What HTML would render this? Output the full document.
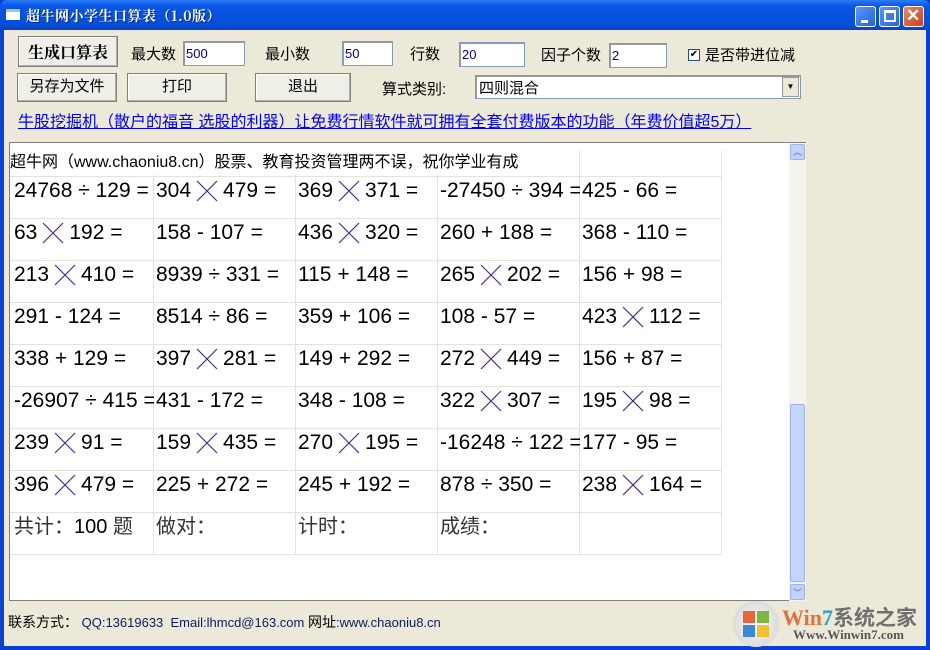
<!DOCTYPE html>
<html><head><meta charset="utf-8"><style>
*{margin:0;padding:0;box-sizing:border-box}
body{width:930px;height:650px;overflow:hidden;background:#0a3fd8;font-family:"Liberation Sans","Noto Sans CJK SC",sans-serif;position:relative}
.title{position:absolute;left:0;top:0;width:930px;height:30px;background:linear-gradient(#2a7cf5,#0a56e6 20%,#0450d8 80%,#0a42c0);border-radius:7px 7px 0 0}
.title .t{position:absolute;left:26px;top:6px;color:#fff;font-weight:bold;font-size:14px;font-family:"Noto Serif CJK SC","Liberation Serif",serif;text-shadow:1px 1px #0a2a80;letter-spacing:0.5px}
.ico{position:absolute;left:6px;top:9px;width:14px;height:11px;background:#fff;border-top:3px solid #9cc}
.tb{position:absolute;top:6px;width:21px;height:21px;border:1px solid #fff;border-radius:3px;background:linear-gradient(135deg,#5a95f5,#2463e0)}
.client{position:absolute;left:4px;top:30px;width:922px;height:616px;background:#ece9d8}
.a{position:absolute;font-size:15px;color:#000;white-space:nowrap}
.btn{position:absolute;background:#f0efe7;border:1px solid #7f7f7f;box-shadow:inset -1px -1px #b5b2a5,inset 1px 1px #fff;font-size:15px;text-align:center;line-height:26px}
.in{position:absolute;background:#fff;border:1px solid #7f9db9;box-shadow:inset 1px 1px #999;font-size:13px;padding:4px 0 0 2px;color:#008}
.panel{position:absolute;left:9px;top:142px;width:797px;height:459px;background:#fff;border:1px solid #808080;border-right:none}
.vl{position:absolute;top:8px;width:1px;height:404px;background:#e6e3d6}
.hl{position:absolute;left:0;width:712px;height:1px;background:#e6e3d6}
.c{position:absolute;font-size:21px;line-height:24px;height:24px;white-space:nowrap;color:#000}
.x{display:inline-block;width:24px;height:24px;vertical-align:top;margin:0 4px}
.sb{position:absolute;left:779px;top:0;width:17px;height:458px;background:#f4f3ee}
</style></head><body>
<div class="title"><div class="ico"></div><div class="t">超牛网小学生口算表（1.0版）</div>
<div class="tb" style="left:855px"><div style="position:absolute;left:5px;top:13px;width:7px;height:3px;background:#fff"></div></div>
<div class="tb" style="left:879px"><div style="position:absolute;left:4px;top:3px;width:12px;height:12px;border:2px solid #fff;border-top-width:3px"></div></div>
<div class="tb" style="left:903px;background:linear-gradient(135deg,#e88a6a,#c8401a)"><div style="position:absolute;left:2px;top:-1px;color:#fff;font-size:17px;font-weight:bold">✕</div></div>
</div>
<div class="client"></div>
<div class="btn" style="left:18px;top:36px;width:100px;height:31px;line-height:29px;font-weight:bold;font-size:16px;font-family:'Noto Serif CJK SC',serif">生成口算表</div>
<div class="a" style="left:131px;top:43px">最大数</div><div class="in" style="left:183px;top:41px;width:62px;height:25px">500</div>
<div class="a" style="left:265px;top:43px">最小数</div><div class="in" style="left:342px;top:41px;width:51px;height:25px">50</div>
<div class="a" style="left:410px;top:43px">行数</div><div class="in" style="left:459px;top:42px;width:66px;height:25px">20</div>
<div class="a" style="left:541px;top:44px">因子个数</div><div class="in" style="left:609px;top:43px;width:58px;height:25px">2</div>
<div style="position:absolute;left:688px;top:49px;width:12px;height:12px;background:#fff;border:1px solid #1c5180;font-size:10px;line-height:10px;text-align:center">✔</div>
<div class="a" style="left:705px;top:44px">是否带进位减</div>
<div class="btn" style="left:17px;top:73px;width:100px;height:29px">另存为文件</div>
<div class="btn" style="left:127px;top:73px;width:100px;height:29px">打印</div>
<div class="btn" style="left:255px;top:73px;width:96px;height:29px">退出</div>
<div class="a" style="left:382px;top:78px">算式类别:</div>
<div class="in" style="left:475px;top:75px;width:326px;height:24px;color:#000;font-size:15px;padding:1px 0 0 3px">四则混合<div style="position:absolute;right:1px;top:1px;width:17px;height:20px;background:#ece9d8;border:1px solid #999;font-size:8px;text-align:center;line-height:18px">▼</div></div>
<div class="a" style="left:18px;top:108px;color:#00f;text-decoration:underline;font-size:16px">牛股挖掘机（散户的福音 选股的利器）让免费行情软件就可拥有全套付费版本的功能（年费价值超5万）</div>
<div class="panel">
<div class="vl" style="left:143px"></div><div class="vl" style="left:285px"></div><div class="vl" style="left:427px"></div><div class="vl" style="left:569px"></div><div class="vl" style="left:711px"></div>
<div class="c" style="left:0px;top:8px;font-size:16px;background:#fff">超牛网（www.chaoniu8.cn）股票、教育投资管理两不误，祝你学业有成</div>
<div class="hl" style="top:33px"></div><div class="hl" style="top:75px"></div><div class="hl" style="top:117px"></div><div class="hl" style="top:159px"></div><div class="hl" style="top:201px"></div><div class="hl" style="top:243px"></div><div class="hl" style="top:285px"></div><div class="hl" style="top:327px"></div><div class="hl" style="top:369px"></div><div class="hl" style="top:411px"></div>
<svg width="0" height="0" style="position:absolute"><defs><symbol id="m" viewBox="0 0 24 24"><path d="M2 2L22 22M22 2L2 22" stroke="#4a2a8a" stroke-width="1.2"/></symbol></defs></svg>
<div class="c" style="left:4px;top:36px;width:140px;overflow:hidden">24768 ÷ 129 =</div><div class="c" style="left:146px;top:36px">304<svg class="x"><use href="#m"/></svg>479 =</div><div class="c" style="left:288px;top:36px">369<svg class="x"><use href="#m"/></svg>371 =</div><div class="c" style="left:430px;top:36px;width:140px;overflow:hidden">-27450 ÷ 394 =</div><div class="c" style="left:572px;top:36px">425 - 66 =</div>
<div class="c" style="left:4px;top:78px">63<svg class="x"><use href="#m"/></svg>192 =</div><div class="c" style="left:146px;top:78px">158 - 107 =</div><div class="c" style="left:288px;top:78px">436<svg class="x"><use href="#m"/></svg>320 =</div><div class="c" style="left:430px;top:78px">260 + 188 =</div><div class="c" style="left:572px;top:78px">368 - 110 =</div>
<div class="c" style="left:4px;top:120px">213<svg class="x"><use href="#m"/></svg>410 =</div><div class="c" style="left:146px;top:120px">8939 ÷ 331 =</div><div class="c" style="left:288px;top:120px">115 + 148 =</div><div class="c" style="left:430px;top:120px">265<svg class="x"><use href="#m"/></svg>202 =</div><div class="c" style="left:572px;top:120px">156 + 98 =</div>
<div class="c" style="left:4px;top:162px">291 - 124 =</div><div class="c" style="left:146px;top:162px">8514 ÷ 86 =</div><div class="c" style="left:288px;top:162px">359 + 106 =</div><div class="c" style="left:430px;top:162px">108 - 57 =</div><div class="c" style="left:572px;top:162px">423<svg class="x"><use href="#m"/></svg>112 =</div>
<div class="c" style="left:4px;top:204px">338 + 129 =</div><div class="c" style="left:146px;top:204px">397<svg class="x"><use href="#m"/></svg>281 =</div><div class="c" style="left:288px;top:204px">149 + 292 =</div><div class="c" style="left:430px;top:204px">272<svg class="x"><use href="#m"/></svg>449 =</div><div class="c" style="left:572px;top:204px">156 + 87 =</div>
<div class="c" style="left:4px;top:246px;width:140px;overflow:hidden">-26907 ÷ 415 =</div><div class="c" style="left:146px;top:246px">431 - 172 =</div><div class="c" style="left:288px;top:246px">348 - 108 =</div><div class="c" style="left:430px;top:246px">322<svg class="x"><use href="#m"/></svg>307 =</div><div class="c" style="left:572px;top:246px">195<svg class="x"><use href="#m"/></svg>98 =</div>
<div class="c" style="left:4px;top:288px">239<svg class="x"><use href="#m"/></svg>91 =</div><div class="c" style="left:146px;top:288px">159<svg class="x"><use href="#m"/></svg>435 =</div><div class="c" style="left:288px;top:288px">270<svg class="x"><use href="#m"/></svg>195 =</div><div class="c" style="left:430px;top:288px;width:140px;overflow:hidden">-16248 ÷ 122 =</div><div class="c" style="left:572px;top:288px">177 - 95 =</div>
<div class="c" style="left:4px;top:330px">396<svg class="x"><use href="#m"/></svg>479 =</div><div class="c" style="left:146px;top:330px">225 + 272 =</div><div class="c" style="left:288px;top:330px">245 + 192 =</div><div class="c" style="left:430px;top:330px">878 ÷ 350 =</div><div class="c" style="left:572px;top:330px">238<svg class="x"><use href="#m"/></svg>164 =</div>
<div class="c" style="left:4px;top:372px;color:#333;font-size:20px">共计：<span style="color:#000">100</span> 题</div><div class="c" style="left:146px;top:372px;color:#333;font-size:20px">做对：</div><div class="c" style="left:288px;top:372px;color:#333;font-size:20px">计时：</div><div class="c" style="left:430px;top:372px;color:#333;font-size:20px">成绩：</div>
<div class="sb"><div style="position:absolute;left:1px;top:1px;width:15px;height:16px;background:#c1d3fb;border:1px solid #9db2e8;border-radius:2px;font-size:9px;text-align:center;color:#4d6185;line-height:14px">︿</div>
<div style="position:absolute;left:1px;top:261px;width:15px;height:178px;background:#c3d5fd;border:1px solid #9db2e8;border-radius:2px"></div>
<div style="position:absolute;left:1px;top:441px;width:15px;height:16px;background:#c1d3fb;border:1px solid #9db2e8;border-radius:2px;font-size:9px;text-align:center;color:#4d6185;line-height:16px">﹀</div></div>
</div>
<div class="a" style="left:8px;top:612px;font-size:14px">联系方式：<span style="font-size:13px;color:#102060"> QQ:13619633&nbsp; Email:lhmcd@163.com </span>网址<span style="font-size:13px;color:#102060">:www.chaoniu8.cn</span></div>
<div style="position:absolute;left:733px;top:601px;width:46px;height:46px;border-radius:50%;background:radial-gradient(#fff,#ccc)"><div style="position:absolute;left:10px;top:10px;width:12px;height:12px;background:#e8663a"></div><div style="position:absolute;left:24px;top:10px;width:12px;height:12px;background:#7ab840"></div><div style="position:absolute;left:10px;top:24px;width:12px;height:12px;background:#3a8ad8"></div><div style="position:absolute;left:24px;top:24px;width:12px;height:12px;background:#f4c030"></div></div>
<div style="position:absolute;left:782px;top:602px;font-size:22px;font-weight:bold;color:#e07040;font-family:'Liberation Serif',serif">Win<span style="color:#2ba0d8">7</span><span style="color:#707070;font-family:'Noto Sans CJK SC',sans-serif;font-size:21px">系统之家</span></div>
<div style="position:absolute;left:793px;top:627px;font-size:13px;font-weight:bold;color:#555;font-family:'Liberation Serif',serif">Www.Winwin7.com</div>
</body></html>
